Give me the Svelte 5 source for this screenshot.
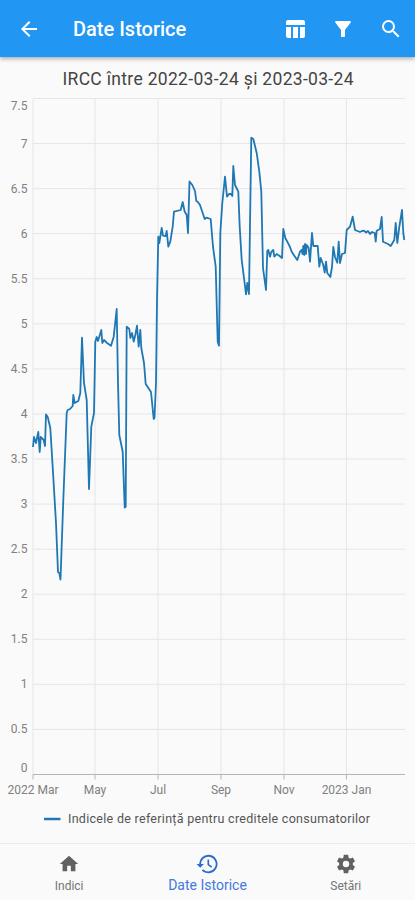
<script>
  const left = 33;
  const right = 405;
  const top = 41.5;
  const bottom = 717.5;

  const yTicks = [7.5, 7, 6.5, 6, 5.5, 5, 4.5, 4, 3.5, 3, 2.5, 2, 1.5, 1, 0.5, 0];

  const months = [
    { label: '2022 Mar', x: 33 },
    { label: 'May', x: 95 },
    { label: 'Jul', x: 158 },
    { label: 'Sep', x: 221 },
    { label: 'Nov', x: 284 },
    { label: '2023 Jan', x: 346.5 },
  ];

  const tabs = [
    { id: 'home', label: 'Indici' },
    { id: 'history', label: 'Date Istorice' },
    { id: 'settings', label: 'Setări' },
  ];

  let active = $state('history');

  function yFor(value) {
    return bottom - (value / 7.5) * (bottom - top);
  }

  // keep the first and last label inside the plot
  function labelY(value) {
    if (value === 7.5) return yFor(value) + 11.5;
    if (value === 0) return yFor(value) - 2.5;
    return yFor(value) + 4;
  }

  const series = `
    33,447 34,437 36,443 38.3,432 39.7,452 40.7,437 43.7,440 45,446 46,414.5 47.7,417 50.3,428
    52.7,467 56,523 58,572 59.3,573 60.5,579.5 63.3,500 66.7,413 67.7,410 70,409 72.7,406 73.3,395
    74.7,403 78.3,401 80.3,393 82,337.7 84,383 86.7,400 89,489 91.3,426.7 94,413 95.3,341.7
    96.7,337 98,341 101.3,330 102.3,343 104,340 106.7,342.7 111,345.7 113.7,336.7 116.7,309
    118,383 119.3,435 122.7,451.7 124.7,507.5 125.7,506.7 126.7,326.7 129.3,329 130.3,338 132,333
    133.7,341.7 135.3,335 137,325.7 138.7,346.7 140.3,330 141.3,348 144,363 145.7,384 151,392
    153.7,419 154.5,418 156,383 157,300 158.3,236.7 159.3,243 161.7,228 163,235.7 165.7,236
    166.7,231 168.3,246.7 170.3,241.7 172.7,226.7 174,211.7 180.7,210 182.7,202 184.7,211.7
    186.7,215 188,233 189.5,181.5 192.3,185 195,191 196.3,201 197.7,201.7 200,205 204.7,219
    206.3,217.7 210.7,219 213,246.7 215.7,266.7 217.7,341.7 219,345.7 220.3,233 222.3,203
    225,176.7 227,196.7 229,194 231,194 232.3,196 233.3,166 235,185 238.3,191.7 239.7,226.7
    241.7,260 245,286 246,294.3 247.3,283 249,294 250,225 251.3,137.7 253.3,139 256.7,153
    259.3,171.7 261.3,191.7 263,268 266,290 267.3,251 268.3,250 270,256.7 271.3,252 273.3,250
    274.3,256.7 276.7,254 279.3,255.7 282,258 283.3,229 285.3,238 287.3,241.7 290,247
    291.7,251.7 294.3,255.7 297.3,260 300,251.7 301.7,250 302.5,254 303.3,246 304.2,255 305,244
    306,254 306.7,245 308.7,248 310,261.7 312,233 313.3,246 317.7,246 319.3,266.7 320.7,258
    323.3,265 324.7,272.7 326,261.7 327.3,273 330.3,277 332,267 333.3,247 335,257 337.3,262.7
    338.7,241.7 340,263 342,254 345,253 346.7,230 350,226.7 352.7,216.7 355,230 360,232
    362,231 364,230.7 366,232.5 368,231 370,234 372,232 374.7,233 375.7,241.7 376.7,230.7
    380,229 381.7,217 383,241.7 388,244 390.7,246 394.3,240 395.7,223 397.3,243 399.3,227
    402,210 403.3,233 404.3,240
  `;
</script>

<div class="app">
  <header class="header">
    <button class="icon-button" aria-label="Back">
      <svg viewBox="0 0 24 24"><path d="M20 11H7.83l5.59-5.59L12 4l-8 8 8 8 1.41-1.41L7.83 13H20v-2z" /></svg>
    </button>
    <h1 class="title">Date Istorice</h1>
    <button class="icon-button" aria-label="Table">
      <svg viewBox="0 0 24 24"><path d="M10 10.02h5V21h-5zM17 21h3c1.1 0 2-.9 2-2v-9h-5v11zm3-18H5c-1.1 0-2 .9-2 2v3h19V5c0-1.1-.9-2-2-2zM3 19c0 1.1.9 2 2 2h3V10H3v9z" /></svg>
    </button>
    <button class="icon-button" aria-label="Filter">
      <svg viewBox="0 0 24 24"><path d="M4.25 5.61C6.27 8.2 10 13 10 13v6c0 .55.45 1 1 1h2c.55 0 1-.45 1-1v-6s3.72-4.8 5.74-7.39A.998.998 0 0 0 18.95 4H5.04c-.83 0-1.3.95-.79 1.61z" /></svg>
    </button>
    <button class="icon-button" aria-label="Search">
      <svg viewBox="0 0 24 24"><path d="M15.5 14h-.79l-.28-.27A6.47 6.47 0 0 0 16 9.5 6.5 6.5 0 1 0 9.5 16c1.61 0 3.09-.59 4.23-1.57l.27.28v.79l5 4.99L20.49 19l-4.99-5zm-6 0a4.5 4.5 0 1 1 0-9 4.5 4.5 0 0 1 0 9z" /></svg>
    </button>
  </header>

  <main class="content">
    <svg class="chart" viewBox="0 0 415 786" width="415" height="786">
      <text class="chart-title" x="208" y="27.5" textLength="291">IRCC între 2022-03-24 și 2023-03-24</text>

      {#each yTicks as tick (tick)}
        {#if tick > 0}
          <line class="grid" x1={left} x2={right} y1={yFor(tick)} y2={yFor(tick)} />
        {/if}
        <text class="y-label" x="27.5" y={labelY(tick)}>{tick}</text>
      {/each}

      {#each months as month (month.label)}
        <line class="grid" x1={month.x} x2={month.x} y1={top} y2={bottom} />
        <line class="axis" x1={month.x} x2={month.x} y1={bottom} y2={bottom + 5} />
        <text class="x-label" x={month.x} y="736.5">{month.label}</text>
      {/each}
      <line class="axis" x1={left} x2={right} y1={bottom} y2={bottom} />

      <polyline class="series" points={series} transform="translate(0 -57)" />

      <line class="legend-mark" x1="44" x2="60.5" y1="762" y2="762" />
      <text class="legend" x="68" y="766" textLength="302">Indicele de referință pentru creditele consumatorilor</text>
    </svg>
  </main>

  <nav class="tabs">
    {#each tabs as tab (tab.id)}
      <button class="tab" class:active={active === tab.id} onclick={() => (active = tab.id)}>
        <svg viewBox="0 0 24 24">
          {#if tab.id === 'home'}
            <path d="M10 20v-6h4v6h5v-8h3L12 3 2 12h3v8z" />
          {:else if tab.id === 'history'}
            <path d="M13.5 1.9A10.1 10.1 0 0 0 3.4 12H.6l4 4 4-4H5.5a8 8 0 1 1 2.3 5.7l-1.5 1.5A10.1 10.1 0 1 0 13.5 1.9zM12.5 7v6l4.2 3.2 1-1.5-3.4-2.5V7z" />
          {:else}
            <path d="M19.43 12.98c.04-.32.07-.64.07-.98s-.03-.66-.07-.98l2.11-1.65c.19-.15.24-.42.12-.64l-2-3.46c-.12-.22-.39-.3-.61-.22l-2.49 1c-.52-.4-1.08-.73-1.69-.98l-.38-2.65A.488.488 0 0 0 14 2h-4c-.25 0-.46.18-.49.42l-.38 2.65c-.61.25-1.17.59-1.69.98l-2.49-1c-.23-.09-.49 0-.61.22l-2 3.46c-.13.22-.07.49.12.64l2.11 1.65c-.04.32-.07.65-.07.98s.03.66.07.98l-2.11 1.65c-.19.15-.24.42-.12.64l2 3.46c.12.22.39.3.61.22l2.49-1c.52.4 1.08.73 1.69.98l.38 2.65c.03.24.24.42.49.42h4c.25 0 .46-.18.49-.42l.38-2.65c.61-.25 1.17-.59 1.69-.98l2.49 1c.23.09.49 0 .61-.22l2-3.46c.12-.22.07-.49-.12-.64l-2.11-1.65zM12 15.5a3.5 3.5 0 1 1 0-7 3.5 3.5 0 0 1 0 7z" />
          {/if}
        </svg>
        <span>{tab.label}</span>
      </button>
    {/each}
  </nav>
</div>

<style>
  :global(body) {
    margin: 0;
    background: #fafafa;
    font-family: Roboto, 'Liberation Sans', sans-serif;
  }

  .app {
    display: flex;
    flex-direction: column;
    height: 900px;
    overflow: hidden;
  }

  button {
    border: none;
    background: none;
    padding: 0;
    font-family: inherit;
    cursor: pointer;
  }

  .header {
    position: relative;
    display: flex;
    align-items: center;
    gap: 24px;
    box-sizing: border-box;
    height: 57px;
    flex-shrink: 0;
    padding: 0 12px 0 17px;
    background: #2196f3;
    box-shadow: 0 2px 4px rgba(0, 0, 0, 0.3);
  }

  .icon-button {
    display: flex;
  }

  .icon-button svg {
    width: 24px;
    height: 24px;
    fill: #fff;
  }

  .title {
    flex: 1;
    margin: 1px 0 0 8px;
    color: #fff;
    font-size: 20px;
    font-weight: 500;
  }

  .content {
    height: 786px;
    flex-shrink: 0;
  }

  .chart {
    display: block;
  }

  .chart-title {
    font-size: 17.5px;
    fill: #444;
    text-anchor: middle;
  }

  .grid {
    stroke: #e6e6e6;
    stroke-width: 1;
  }

  .axis {
    stroke: #b5b5b5;
    stroke-width: 1;
  }

  .y-label,
  .x-label {
    font-size: 12px;
    fill: #808080;
  }

  .y-label {
    text-anchor: end;
  }

  .x-label {
    text-anchor: middle;
  }

  .series {
    fill: none;
    stroke: #1f77b4;
    stroke-width: 1.8;
    stroke-linejoin: round;
  }

  .legend-mark {
    stroke: #1f77b4;
    stroke-width: 2.5;
  }

  .legend {
    font-size: 12.5px;
    fill: #555;
  }

  .tabs {
    display: flex;
    flex: 1;
    border-top: 1px solid #ebebeb;
  }

  .tab {
    flex: 1;
    display: flex;
    flex-direction: column;
    align-items: center;
    gap: 3px;
    padding-top: 9px;
    color: #757575;
    font-size: 12px;
    line-height: 16px;
  }

  .tab svg {
    width: 22px;
    height: 22px;
    fill: #616161;
  }

  .tab.active {
    color: #4478dc;
    font-size: 14px;
    line-height: 15px;
  }

  .tab.active svg {
    fill: #2a6bd0;
  }
</style>
